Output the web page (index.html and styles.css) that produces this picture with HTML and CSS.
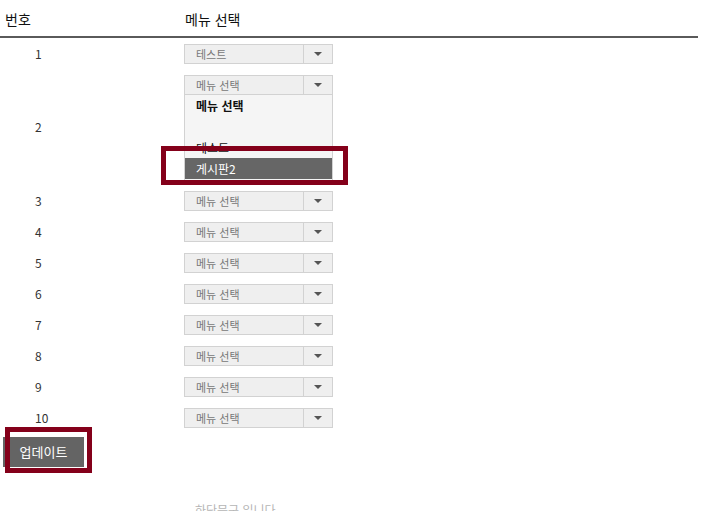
FILE: index.html
```html
<!DOCTYPE html>
<html lang="ko">
<head>
<meta charset="utf-8">
<link rel="stylesheet" href="styles.css">
</head>
<body>
<div class="page">
  <div class="head">
    <div class="c-num">번호</div>
    <div class="c-menu">메뉴 선택</div>
  </div>
  <div class="row"><div class="num">1</div><div class="menu"><div class="sel"><span class="val">테스트</span><span class="arr"></span></div></div></div>
  <div class="row open"><div class="num">2</div><div class="menu"><div class="sel"><span class="val">메뉴 선택</span><span class="arr"></span></div>
    <div class="list">
      <div class="opt bold">메뉴 선택</div>
      <div class="opt"></div>
      <div class="opt">테스트</div>
      <div class="opt hl">게시판2</div>
    </div>
    <div class="mark mark-list"></div>
  </div></div>
  <div class="row"><div class="num">3</div><div class="menu"><div class="sel"><span class="val">메뉴 선택</span><span class="arr"></span></div></div></div>
  <div class="row"><div class="num">4</div><div class="menu"><div class="sel"><span class="val">메뉴 선택</span><span class="arr"></span></div></div></div>
  <div class="row"><div class="num">5</div><div class="menu"><div class="sel"><span class="val">메뉴 선택</span><span class="arr"></span></div></div></div>
  <div class="row"><div class="num">6</div><div class="menu"><div class="sel"><span class="val">메뉴 선택</span><span class="arr"></span></div></div></div>
  <div class="row"><div class="num">7</div><div class="menu"><div class="sel"><span class="val">메뉴 선택</span><span class="arr"></span></div></div></div>
  <div class="row"><div class="num">8</div><div class="menu"><div class="sel"><span class="val">메뉴 선택</span><span class="arr"></span></div></div></div>
  <div class="row"><div class="num">9</div><div class="menu"><div class="sel"><span class="val">메뉴 선택</span><span class="arr"></span></div></div></div>
  <div class="row"><div class="num">10</div><div class="menu"><div class="sel"><span class="val">메뉴 선택</span><span class="arr"></span></div></div></div>
  <div class="actions">
    <button class="btn">업데이트</button>
    <div class="mark mark-btn"></div>
  </div>
  <div class="foot">하단문구 입니다</div>
</div>
</body>
</html>
```
FILE: styles.css
```css
* { box-sizing: border-box; }
html, body { margin: 0; padding: 0; background: #fff; }
body {
  font-family: "Noto Sans CJK KR", "Noto Sans", sans-serif;
  color: #222;
}
.page { width: 698px; position: relative; }
.head {
  display: flex;
  height: 38px;
  border-bottom: 2px solid #5a5a5a;
  align-items: center;
  font-size: 14px;
  color: #111;
  padding-top: 2px;
}
.c-num { width: 184px; padding-left: 5px; }
.c-menu { padding-left: 1px; }
.row {
  display: flex;
  align-items: center;
  height: 31px;
}
.row.open { height: 116px; align-items: flex-start; }
.row.open .num { align-self: center; margin-top: -2px; }
.num {
  width: 184px;
  padding-left: 35px;
  font-size: 12px;
  color: #333;
}
.menu { position: relative; width: 149px; }
.row.open .menu { padding-top: 6px; }
.sel {
  display: flex;
  height: 20px;
  border: 1px solid #d2d2d2;
  background: #efefef;
  font-size: 11px;
  color: #777;
  align-items: center;
}
.val { flex: 1; padding-left: 11px; line-height: 18px; }
.arr {
  width: 29px;
  height: 18px;
  border-left: 1px solid #d2d2d2;
  position: relative;
}
.arr::after {
  content: "";
  position: absolute;
  left: 10px;
  top: 7px;
  border-left: 4px solid transparent;
  border-right: 4px solid transparent;
  border-top: 4px solid #555;
}
.list {
  border: 1px solid #d2d2d2;
  border-top: 0;
  background: #f5f5f5;
  padding-bottom: 1px;
}
.opt {
  height: 21px;
  line-height: 21px;
  padding-left: 11px;
  font-size: 12px;
  color: #111;
}
.opt.bold { font-weight: bold; }
.opt.hl { background: #666; color: #fff; }
.mark {
  position: absolute;
  border: 5px solid #84001a;
  pointer-events: none;
}
.mark-list { left: -23px; top: 77px; width: 187px; height: 39px; }
.actions { position: relative; height: 70px; padding-top: 4px; }
.btn {
  margin-left: 3px;
  width: 82px;
  height: 31px;
  background: #646464;
  color: #fff;
  border: 0;
  border-right: 1px solid #fff;
  border-bottom: 1px solid #fff;
  font-family: "Noto Sans CJK KR", "Noto Sans", sans-serif;
  font-size: 13px;
  padding: 0 0 1px 0;
}
.mark-btn { left: 5px; top: -6px; width: 87px; height: 46px; }
.foot {
  padding-left: 195px;
  font-size: 12px;
  color: #b5b5b5;
  line-height: 14px;
}
```
